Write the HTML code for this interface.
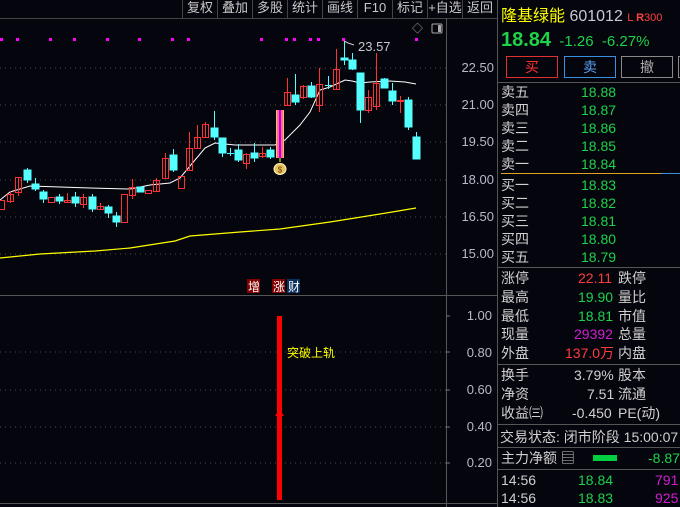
<!DOCTYPE html>
<html><head><meta charset="utf-8"><style>
body{margin:0;width:680px;height:507px;background:#05050d;overflow:hidden;font-family:"Liberation Sans","Noto Sans CJK SC",sans-serif;position:relative}
.a{position:absolute;white-space:nowrap}
.tb{position:absolute;top:0;height:18px;font-size:13px;color:#c8c8c8;line-height:16px;text-align:center;border-left:1px solid #444}
.rp{position:absolute;left:497px;top:0;width:183px;height:507px;border-left:1px solid #555}
.r{position:absolute;left:3px;font-size:14px;color:#d0d0d0;line-height:18px}
.g{color:#1ed24a}.rd{color:#ff3c3c}.pu{color:#d21ed2}
.hl{position:absolute;left:0;width:183px;height:1px;background:#555}
</style></head><body>
<div class="tb" style="left:182px;width:34px">复权</div>
<div class="tb" style="left:217px;width:34px">叠加</div>
<div class="tb" style="left:252px;width:34px">多股</div>
<div class="tb" style="left:287px;width:34px">统计</div>
<div class="tb" style="left:322px;width:34px">画线</div>
<div class="tb" style="left:357px;width:34px">F10</div>
<div class="tb" style="left:392px;width:34px">标记</div>
<div class="tb" style="left:427px;width:34px">+自选</div>
<div class="tb" style="left:462px;width:34px">返回</div>
<svg class="a" style="left:0;top:0" width="497" height="507">
<line x1="0" y1="18.5" x2="497" y2="18.5" stroke="#444"/>
<line x1="446.5" y1="18" x2="446.5" y2="507" stroke="#555"/>
<line x1="0" y1="295.5" x2="497" y2="295.5" stroke="#555"/>
<line x1="0" y1="503.5" x2="497" y2="503.5" stroke="#555"/>
<g stroke="#4a4a55" stroke-dasharray="1,4">
<line x1="0" y1="68" x2="446" y2="68"/><line x1="0" y1="105" x2="446" y2="105"/><line x1="0" y1="142" x2="446" y2="142"/><line x1="0" y1="180" x2="446" y2="180"/><line x1="0" y1="217" x2="446" y2="217"/><line x1="0" y1="254" x2="446" y2="254"/>
<line x1="0" y1="352" x2="446" y2="352"/><line x1="0" y1="390" x2="446" y2="390"/><line x1="0" y1="427" x2="446" y2="427"/><line x1="0" y1="463" x2="446" y2="463"/>
</g>
<g fill="#ff00ff">
<rect x="0" y="38" width="3" height="3"/><rect x="16" y="38" width="3" height="3"/><rect x="49" y="38" width="3" height="3"/><rect x="73" y="38" width="3" height="3"/><rect x="106" y="38" width="3" height="3"/><rect x="138" y="38" width="3" height="3"/><rect x="171" y="38" width="3" height="3"/><rect x="187" y="38" width="3" height="3"/><rect x="260" y="38" width="3" height="3"/><rect x="285" y="38" width="3" height="3"/><rect x="293" y="38" width="3" height="3"/><rect x="309" y="38" width="3" height="3"/><rect x="317" y="38" width="3" height="3"/><rect x="342" y="38" width="3" height="3"/><rect x="415" y="38" width="3" height="3"/>
</g>
<polyline fill="none" stroke="#fff" stroke-width="1" points="0,200 10,192 20,189 30,186 60,187 90,188 130,189 150,185 170,183 180,178 195,160 205,148 215,143 235,145 275,145 285,140 300,125 310,112 320,90 330,87 345,80 352,81 360,83 370,82 390,81 405,82 416,84"/>
<polyline fill="none" stroke="#ffff00" stroke-width="1.2" points="0,258 40,254 95,251 130,248 175,241 190,236 240,232 280,229 330,222 380,214 416,208"/>
<g stroke="#ff3232" fill="none" stroke-width="1">
<rect x="-1.5" y="200.5" width="6" height="9"/>
<line x1="10.5" y1="191" x2="10.5" y2="203"/><rect x="7.5" y="194.5" width="6" height="7"/>
<line x1="18.5" y1="177" x2="18.5" y2="196"/><rect x="15.5" y="177.5" width="6" height="15"/>
<rect x="48.5" y="197.5" width="6" height="5"/>
<line x1="67.5" y1="193" x2="67.5" y2="202"/><rect x="64.5" y="200.5" width="6" height="2"/>
<line x1="83.5" y1="194" x2="83.5" y2="208"/><rect x="80.5" y="197.5" width="6" height="7"/>
<line x1="100.5" y1="203" x2="100.5" y2="209"/><rect x="97.5" y="206.5" width="6" height="3"/>
<rect x="121.5" y="194.5" width="6" height="28"/>
<line x1="132.5" y1="179" x2="132.5" y2="199"/><rect x="129.5" y="187.5" width="6" height="8"/>
<rect x="145.5" y="190.5" width="6" height="3"/>
<line x1="156.5" y1="178" x2="156.5" y2="192"/><rect x="153.5" y="180.5" width="6" height="11"/>
<line x1="165.5" y1="153" x2="165.5" y2="179"/><rect x="162.5" y="158.5" width="6" height="20"/>
<rect x="178.5" y="176.5" width="6" height="12"/>
<line x1="189.5" y1="132" x2="189.5" y2="171"/><rect x="186.5" y="148.5" width="6" height="22"/>
<line x1="197.5" y1="125" x2="197.5" y2="148"/><rect x="194.5" y="137.5" width="6" height="11"/>
<line x1="205.5" y1="122" x2="205.5" y2="138"/><rect x="202.5" y="124.5" width="6" height="13"/>
<line x1="246.5" y1="153" x2="246.5" y2="169"/><rect x="243.5" y="154.5" width="6" height="9"/>
<line x1="262.5" y1="147" x2="262.5" y2="158"/><rect x="259.5" y="153.5" width="6" height="3"/>
<line x1="287.5" y1="78" x2="287.5" y2="106"/><rect x="284.5" y="92.5" width="6" height="13"/>
<line x1="303.5" y1="85" x2="303.5" y2="99"/><rect x="300.5" y="86.5" width="6" height="11"/>
<line x1="319.5" y1="68" x2="319.5" y2="112"/><rect x="316.5" y="84.5" width="6" height="21"/>
<line x1="336.5" y1="49" x2="336.5" y2="89"/><rect x="333.5" y="69.5" width="6" height="20"/>
<line x1="368.5" y1="90" x2="368.5" y2="113"/><rect x="365.5" y="97.5" width="6" height="13"/>
<line x1="376.5" y1="53" x2="376.5" y2="110"/><rect x="373.5" y="83.5" width="6" height="23"/>
<line x1="400.5" y1="96" x2="400.5" y2="113"/><rect x="397.5" y="100.5" width="6" height="1"/>
</g>
<g fill="#54ffff" stroke="#54ffff">
<line x1="27.5" y1="168" x2="27.5" y2="183"/><rect x="24" y="170" width="7" height="10"/>
<line x1="35.5" y1="178" x2="35.5" y2="191"/><rect x="32" y="184" width="7" height="5"/>
<line x1="43.5" y1="190" x2="43.5" y2="203"/><rect x="40" y="192" width="7" height="7"/>
<line x1="59.5" y1="194" x2="59.5" y2="204"/><rect x="56" y="197" width="7" height="4"/>
<line x1="75.5" y1="192" x2="75.5" y2="207"/><rect x="72" y="197" width="7" height="6"/>
<line x1="92.5" y1="194" x2="92.5" y2="212"/><rect x="89" y="197" width="7" height="12"/>
<line x1="108.5" y1="205" x2="108.5" y2="218"/><rect x="105" y="207" width="7" height="6"/>
<line x1="116.5" y1="212" x2="116.5" y2="227"/><rect x="113" y="216" width="7" height="6"/>
<rect x="137" y="187" width="7" height="5"/>
<line x1="173.5" y1="149" x2="173.5" y2="172"/><rect x="170" y="155" width="7" height="15"/>
<line x1="214.5" y1="111" x2="214.5" y2="140"/><rect x="211" y="128" width="7" height="9"/>
<line x1="222.5" y1="138" x2="222.5" y2="157"/><rect x="219" y="138" width="7" height="15"/>
<line x1="230.5" y1="148" x2="230.5" y2="156"/><line x1="227" y1="153.5" x2="234" y2="153.5"/>
<line x1="238.5" y1="144" x2="238.5" y2="162"/><rect x="235" y="150" width="7" height="10"/>
<line x1="254.5" y1="143" x2="254.5" y2="162"/><rect x="251" y="153" width="7" height="5"/>
<line x1="270.5" y1="147" x2="270.5" y2="159"/><rect x="267" y="150" width="7" height="7"/>
<line x1="295.5" y1="74" x2="295.5" y2="105"/><rect x="292" y="95" width="7" height="7"/>
<line x1="311.5" y1="82" x2="311.5" y2="98"/><rect x="308" y="86" width="7" height="11"/>
<line x1="328.5" y1="76" x2="328.5" y2="89"/><line x1="325" y1="85.5" x2="332" y2="85.5"/>
<line x1="344.5" y1="41" x2="344.5" y2="65"/><rect x="341" y="58" width="7" height="2"/>
<line x1="352.5" y1="53" x2="352.5" y2="70"/><rect x="349" y="60" width="7" height="9"/>
<line x1="360.5" y1="73" x2="360.5" y2="123"/><rect x="357" y="73" width="7" height="37"/>
<line x1="384.5" y1="78" x2="384.5" y2="88"/><rect x="381" y="79" width="7" height="9"/>
<line x1="392.5" y1="83" x2="392.5" y2="105"/><rect x="389" y="91" width="7" height="10"/>
<line x1="408.5" y1="97" x2="408.5" y2="130"/><rect x="405" y="100" width="7" height="27"/>
<line x1="416.5" y1="132" x2="416.5" y2="159"/><rect x="413" y="137" width="7" height="22"/>
</g>
<rect x="276" y="110" width="8" height="48" fill="#ffc040"/>
<rect x="277" y="110" width="6" height="48" fill="#ff60c0"/>
<rect x="279" y="110" width="2" height="48" fill="#c000c0"/>
<line x1="280" y1="158" x2="280" y2="162" stroke="#ffff00"/>
<ellipse cx="280" cy="169" rx="6" ry="5.5" fill="#e8c060" stroke="#fff5c0"/>
<text x="280" y="172.5" font-size="8" text-anchor="middle" fill="#604000" font-family="Liberation Sans">$</text>
<polyline points="344,41 348,43 354,45" fill="none" stroke="#ccc"/>
<text x="358" y="51" font-size="13" fill="#c8c8d0" font-family="Liberation Sans">23.57</text>
<text x="412" y="32" font-size="11" fill="#aaa">◇</text>
<rect x="432" y="24" width="10" height="9" fill="none" stroke="#aaa" rx="1"/><rect x="438" y="25" width="3" height="7" fill="#aaa"/>
<g font-size="13" fill="#b8b8c8" font-family="Liberation Sans" text-anchor="end">
<text x="494" y="72">22.50</text><text x="494" y="109">21.00</text><text x="494" y="146">19.50</text><text x="494" y="184">18.00</text><text x="494" y="221">16.50</text><text x="494" y="258">15.00</text>
<text x="492" y="320">1.00</text><text x="492" y="357">0.80</text><text x="492" y="394">0.60</text><text x="492" y="431">0.40</text><text x="492" y="467">0.20</text>
</g>
<g stroke="#777"><line x1="446" y1="316" x2="450" y2="316"/><line x1="446" y1="352" x2="450" y2="352"/><line x1="446" y1="390" x2="450" y2="390"/><line x1="446" y1="427" x2="450" y2="427"/><line x1="446" y1="463" x2="450" y2="463"/></g>
<rect x="277" y="316" width="5" height="184" fill="#ff0000"/>
<polygon points="279.5,409 275,416 284,416" fill="#ff0000"/>
<rect x="247" y="279" width="13" height="14" fill="#800000"/><text x="248" y="291" font-size="12" fill="#fff">增</text>
<rect x="272" y="279" width="13" height="14" fill="#800000"/><text x="273" y="291" font-size="12" fill="#fff">涨</text>
<rect x="287" y="279" width="13" height="14" fill="#0a3060"/><text x="288" y="291" font-size="12" fill="#fff">财</text>
<text x="287" y="357" font-size="12" fill="#ffff00">突破上轨</text>
</svg>
<div class="rp">
<div class="a" style="left:3px;top:2px;font-size:16px;color:#ffff00">隆基绿能 <span style="color:#c8c8d0;font-family:'Liberation Sans'">601012</span> <span style="color:#ff4040;font-size:11px">L <b>R</b>300</span></div>
<div class="a" style="left:3px;top:29px;font-size:15px;color:#1ed24a"><b style="font-size:20px">18.84</b>&nbsp; -1.26 &nbsp;-6.27%</div>
<div class="a" style="left:8px;top:56px;width:50px;height:20px;border:1px solid #e03030;color:#ff3030;font-size:14px;text-align:center;line-height:20px">买</div>
<div class="a" style="left:66px;top:56px;width:50px;height:20px;border:1px solid #3a90e0;color:#5aa0f0;font-size:14px;text-align:center;line-height:20px">卖</div>
<div class="a" style="left:123px;top:56px;width:50px;height:20px;border:1px solid #888;color:#aaa;font-size:14px;text-align:center;line-height:20px">撤</div>
<div class="a" style="left:180px;top:56px;width:10px;height:20px;border:1px solid #888"></div>
<div class="hl" style="top:82px"></div>
<div class="r" style="top:83px">卖五</div><div class="r g" style="left:83px;top:83px">18.88</div>
<div class="r" style="top:101px">卖四</div><div class="r g" style="left:83px;top:101px">18.87</div>
<div class="r" style="top:119px">卖三</div><div class="r g" style="left:83px;top:119px">18.86</div>
<div class="r" style="top:137px">卖二</div><div class="r g" style="left:83px;top:137px">18.85</div>
<div class="r" style="top:155px">卖一</div><div class="r g" style="left:83px;top:155px">18.84</div>
<div class="a" style="left:3px;top:173px;width:160px;height:1px;background:#e0a020"></div><div class="a" style="left:163px;top:173px;width:20px;height:1px;background:#3a90e0"></div>
<div class="r" style="top:176px">买一</div><div class="r g" style="left:83px;top:176px">18.83</div>
<div class="r" style="top:194px">买二</div><div class="r g" style="left:83px;top:194px">18.82</div>
<div class="r" style="top:212px">买三</div><div class="r g" style="left:83px;top:212px">18.81</div>
<div class="r" style="top:230px">买四</div><div class="r g" style="left:83px;top:230px">18.80</div>
<div class="r" style="top:248px">买五</div><div class="r g" style="left:83px;top:248px">18.79</div>
<div class="hl" style="top:267px"></div>
<div class="r" style="top:269px">涨停</div><div class="r rd" style="left:80px;top:269px">22.11</div><div class="r" style="left:120px;top:269px">跌停</div>
<div class="r" style="top:288px">最高</div><div class="r g" style="left:80px;top:288px">19.90</div><div class="r" style="left:120px;top:288px">量比</div>
<div class="r" style="top:307px">最低</div><div class="r g" style="left:80px;top:307px">18.81</div><div class="r" style="left:120px;top:307px">市值</div>
<div class="r" style="top:325px">现量</div><div class="r pu" style="left:76px;top:325px">29392</div><div class="r" style="left:120px;top:325px">总量</div>
<div class="r" style="top:344px">外盘</div><div class="r rd" style="left:67px;top:344px">137.0万</div><div class="r" style="left:120px;top:344px">内盘</div>
<div class="hl" style="top:364px"></div>
<div class="r" style="top:366px">换手</div><div class="r" style="left:76px;top:366px">3.79%</div><div class="r" style="left:120px;top:366px">股本</div>
<div class="r" style="top:385px">净资</div><div class="r" style="left:89px;top:385px">7.51</div><div class="r" style="left:120px;top:385px">流通</div>
<div class="r" style="top:404px">收益㈢</div><div class="r" style="left:74px;top:404px">-0.450</div><div class="r" style="left:120px;top:404px">PE(动)</div>
<div class="hl" style="top:424px"></div>
<div class="r" style="top:428px;left:2px">交易状态: 闭市阶段 15:00:07</div>
<div class="hl" style="top:447px"></div>
<div class="r" style="top:449px">主力净额 ▤</div>
<div class="a" style="left:95px;top:455px;width:24px;height:6px;background:#00d040"></div>
<div class="r g" style="left:150px;top:449px">-8.874</div>
<div class="hl" style="top:469px"></div>
<div class="r" style="top:471px">14:56</div><div class="r g" style="left:80px;top:471px">18.84</div><div class="r pu" style="left:157px;top:471px">791</div>
<div class="r" style="top:489px">14:56</div><div class="r g" style="left:80px;top:489px">18.83</div><div class="r pu" style="left:157px;top:489px">925</div>
</div>
</body></html>
